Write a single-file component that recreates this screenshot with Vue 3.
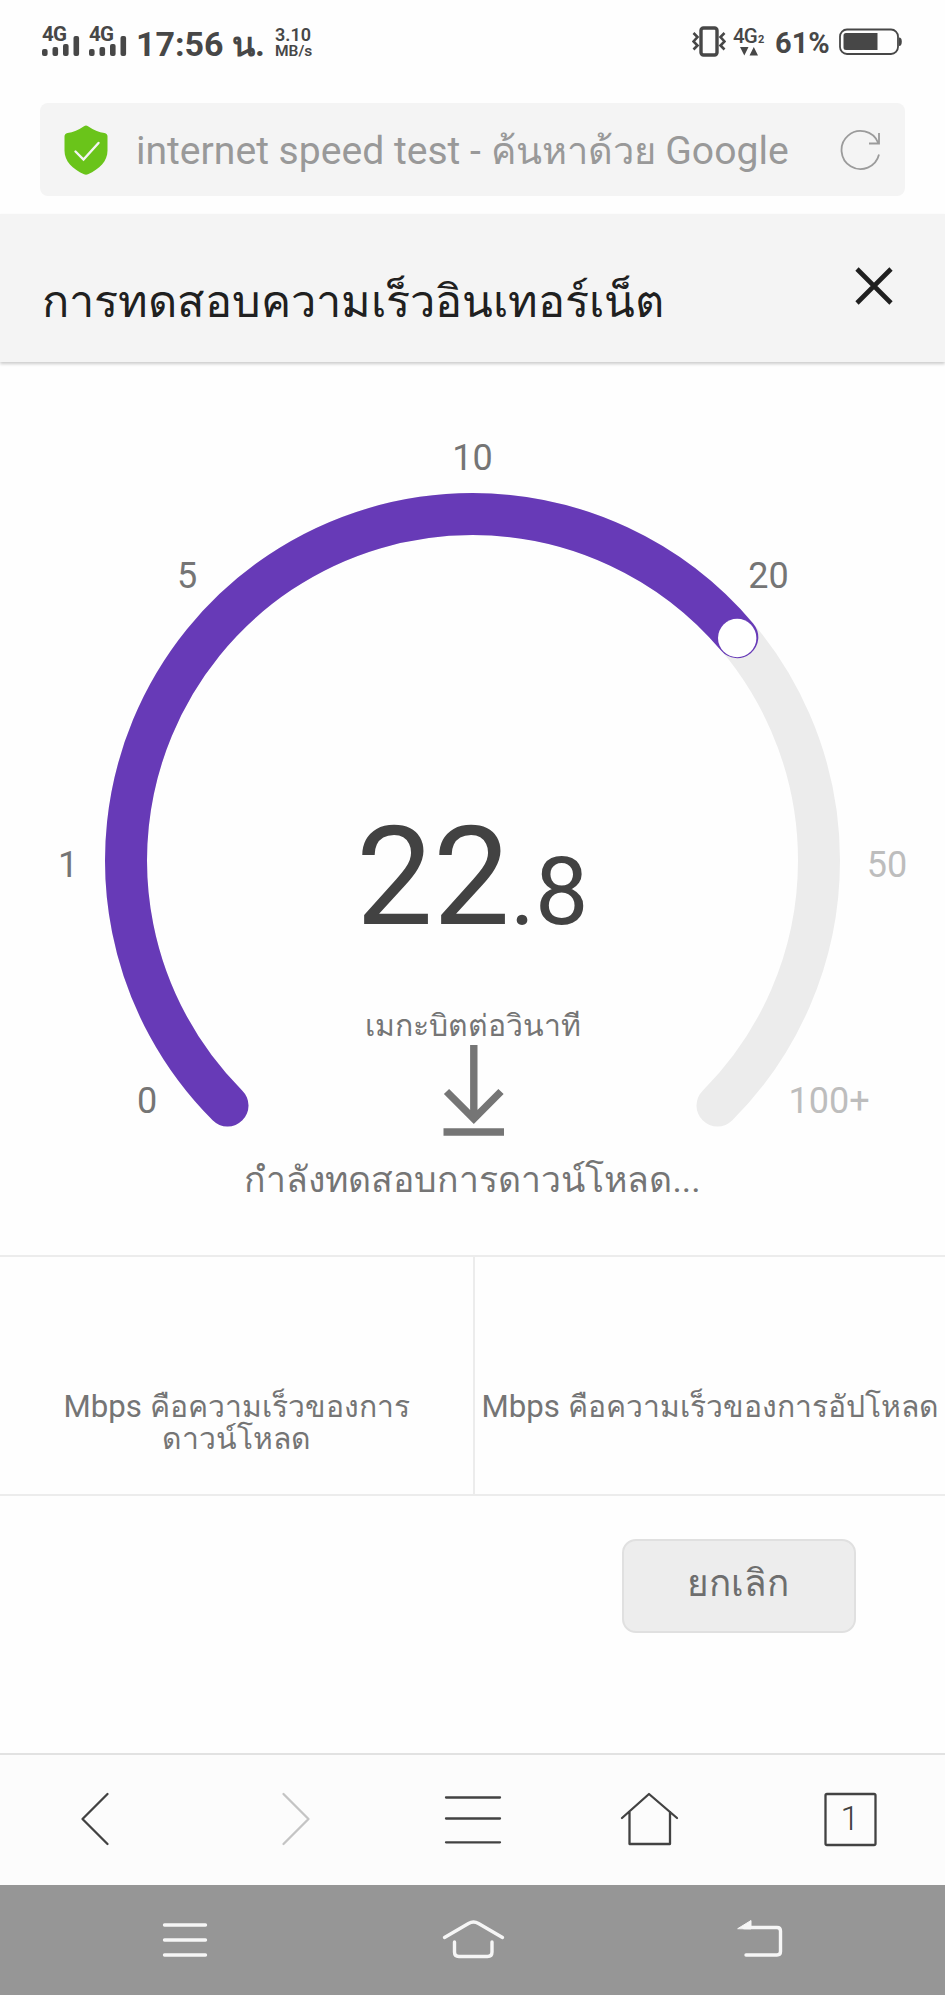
<script setup>
const signals = [0, 1]
const bars = [
  { x: 0, h: 7 },
  { x: 10.5, h: 9 },
  { x: 21, h: 12 },
  { x: 31.5, h: 20 },
]
const ticks = [
  { label: '0', x: 147, y: 1113 },
  { label: '1', x: 68, y: 877 },
  { label: '5', x: 187, y: 588 },
  { label: '10', x: 472.5, y: 470 },
  { label: '20', x: 768.5, y: 588 },
  { label: '50', x: 887, y: 877, dim: true },
  { label: '100+', x: 829, y: 1113, dim: true },
]
</script>

<template>
  <div class="phone">
    <header class="status">
      <svg v-for="s in signals" :key="s" class="signal" width="38" height="42" viewBox="0 -6 38 42">
        <text x="0" y="17" class="net">4G</text>
        <rect v-for="b in bars" :key="b.x" :x="b.x" :y="32 - b.h" width="5.6" :height="b.h" rx="2" />
      </svg>
      <span class="clock">17:56 น.</span>
      <span class="rate"><span class="amount">3.10</span><span>MB/s</span></span>
      <span class="grow"></span>
      <svg class="vibrate" width="34" height="32" viewBox="0 0 34 32">
        <rect x="9" y="2" width="16" height="27" rx="2.5" fill="none" stroke="#474747" stroke-width="3.4" />
        <path d="M1.5 7l4 4-4 4.500 4 4-4 4M32.500 7l-4 4 4 4.500-4 4 4 4" fill="none" stroke="#474747" stroke-width="2.6" />
      </svg>
      <svg class="data" width="34" height="38" viewBox="0 -6 34 38">
        <text x="0" y="16.500" class="data-net">4G</text>
        <text x="25" y="16.500" class="data-sub">2</text>
        <path d="M7 21h8.500l-4.200 8.500zM16.500 29.500H25L20.800 21z" fill="#474747" />
      </svg>
      <span class="percent">61%</span>
      <svg class="battery" width="64" height="28" viewBox="0 0 64 28">
        <rect x="1" y="1.500" width="58" height="24.500" rx="7" fill="none" stroke="#474747" stroke-width="1.800" />
        <path d="M7 5h31.500v17H7a2.500 2.500 0 0 1-2.500-2.500v-12A2.500 2.500 0 0 1 7 5z" fill="#474747" />
        <path d="M60 9.500q2.800 0 2.800 4.200T60 18z" fill="#474747" />
      </svg>
    </header>

    <div class="address">
      <svg class="shield" width="44" height="50" viewBox="0 0 44 50">
        <path d="M20 1.200q2-1.400 4 0 8 5.500 16.500 6.800 3 .5 3 3.500v14c0 11-8 18.500-19.500 23.700q-2 .9-4 0C8.500 44 .5 36.500.5 25.500v-14Q.5 8.500 3.500 8 12 6.700 20 1.200z" fill="#6ac41a" />
        <path d="M11.500 26.500l8 8L34.500 18" fill="none" stroke="#f4f4f4" stroke-width="2.400" stroke-linecap="round" />
      </svg>
      <span class="url">internet speed test - <span class="thai">ค้นหาด้วย</span> Google</span>
      <svg class="reload" width="42" height="42" viewBox="0 0 42 42">
        <path d="M39 25.500A19 19 0 1 1 38 13.500M39 4v10.500H29" fill="none" stroke="#9b9b9b" stroke-width="1.800" />
      </svg>
    </div>

    <div class="title-bar">
      <h1>การทดสอบความเร็วอินเทอร์เน็ต</h1>
      <svg class="close" width="38" height="38" viewBox="0 0 38 38">
        <path d="M2 2l34 34M36 2L2 36" stroke="#1f1f1f" stroke-width="4.600" />
      </svg>
    </div>

    <svg class="gauge" width="945" height="889" viewBox="0 366 945 889">
      <path d="M227.500 1105.500A346.500 346.500 0 1 1 717.500 1105.500" class="track" />
      <path d="M227.500 1105.500A346.500 346.500 0 0 1 472.500 514A346.500 346.500 0 0 1 737.300 637.200" class="progress" />
      <circle cx="737.200" cy="638" r="19.200" fill="#fff" />
      <text v-for="t in ticks" :key="t.label" :x="t.x" :y="t.y" :class="['tick', { dim: t.dim }]">{{ t.label }}</text>
      <text x="356" y="924" class="value">22<tspan class="fraction">.8</tspan></text>
      <text x="472.500" y="1036" class="unit">เมกะบิตต่อวินาที</text>
      <path d="M473.800 1045v74M446.500 1091.500l27.300 27.300L501 1091.500M443.500 1132h60.500" fill="none" stroke="#757575" stroke-width="7.400" />
      <text x="472.500" y="1191.500" class="state">กำลังทดสอบการดาวน์โหลด...</text>
    </svg>

    <section class="results">
      <div class="cell"><p>Mbps <span class="thai">คือความเร็วของการ<br />ดาวน์โหลด</span></p></div>
      <div class="cell"><p>Mbps <span class="thai">คือความเร็วของการอัปโหลด</span></p></div>
    </section>

    <div class="actions"><button class="cancel">ยกเลิก</button></div>

    <nav class="browser-nav">
      <svg width="189" height="129" viewBox="0 1755 189 129"><path d="M107.500 1794L82.500 1819l25 25" /></svg>
      <svg width="189" height="129" viewBox="189 1755 189 129"><path class="off" d="M283.500 1794l25 25-25 25" /></svg>
      <svg width="189" height="129" viewBox="378 1755 189 129"><path d="M446 1797.500h54M446 1818.500h54M446 1842.300h54" /></svg>
      <svg width="189" height="129" viewBox="567 1755 189 129"><path d="M622 1818l27-24 28 24M629.500 1812v32h40.500v-32" /></svg>
      <svg width="189" height="129" viewBox="756 1755 189 129">
        <rect x="825.500" y="1794" width="50" height="51" rx="1.500" />
        <text x="850" y="1830">1</text>
      </svg>
    </nav>

    <nav class="system-nav">
      <svg width="315" height="110" viewBox="0 1885 315 110"><path d="M164.500 1925h41M164.500 1940h41M164.500 1955h41" /></svg>
      <svg width="315" height="110" viewBox="315 1885 315 110"><path d="M444.500 1937.500l24-14q5-3 10 0l24 14M454.500 1942v10q0 4.500 4.500 4.500h28.500q4.500 0 4.500-4.500v-10" /></svg>
      <svg width="315" height="110" viewBox="630 1885 315 110">
        <path d="M744 1927.500h33q3.500 0 3.500 3.500v20.500q0 3.500-3.500 3.500h-31" />
        <path class="tip" d="M738 1928.500l13-8v8z" />
      </svg>
    </nav>
  </div>
</template>

<style>
body { margin: 0; background: #fefefe; }
</style>

<style scoped>
.phone {
  width: 945px;
  height: 1995px;
  display: flex;
  flex-direction: column;
  background: #fefefe;
  font-family: Roboto, "Noto Sans", sans-serif;
  overflow: hidden;
}
.phone svg { display: block; flex: none; }
.status { height: 103px; box-sizing: border-box; padding: 24px 42px 0; display: flex; align-items: flex-start; color: #474747; fill: #474747; }
.signal { margin: -6px 9px 0 0; }
.net { font-size: 20.5px; font-weight: 700; letter-spacing: -0.8px; }
.clock { font-size: 34px; line-height: 40px; font-weight: 700; white-space: nowrap; width: 128px; }
.rate { display: flex; flex-direction: column; font-size: 15.5px; line-height: 16px; font-weight: 600; margin: 3px 0 0 11px; }
.rate .amount { font-size: 18px; }
.grow { flex: 1; }
.vibrate { margin: 2px 7px 0 0; }
.data { margin: -4px 8px 0 0; }
.data-net { font-size: 20.5px; font-weight: 500; letter-spacing: -0.8px; }
.data-sub { font-size: 11px; font-weight: 700; }
.percent { font-size: 29px; line-height: 38px; font-weight: 700; width: 56px; white-space: nowrap; }
.battery { margin: 4px 0 0 8px; }
.address { height: 93px; margin: 0 40px; padding: 0 23px 0 24px; display: flex; align-items: center; background: #f4f4f4; border-radius: 8px; flex: none; }
.url { flex: 1; padding: 3px 0 0 28px; font-size: 39.1px; line-height: 50px; color: #999; white-space: nowrap; }
.url .thai { font-size: 38px; }
.title-bar { height: 148px; margin-top: 18px; display: flex; justify-content: space-between; background: #f4f4f4; box-shadow: 0 2px 3px rgba(0, 0, 0, 0.2); flex: none; padding: 0 52px 0 42px; }
.title-bar h1 { margin: 58px 0 0; font-size: 45.1px; line-height: 60px; font-weight: 400; color: #202020; white-space: nowrap; }
.close { margin-top: 53px; }
.gauge { margin-top: 4px; height: 889px; }
.track, .progress { fill: none; stroke-width: 42; stroke-linecap: round; }
.track { stroke: #ececec; }
.progress { stroke: #673ab7; }
.tick { font-size: 36px; fill: #757575; text-anchor: middle; }
.dim { fill: #bdbdbd; }
.value { font-size: 137px; fill: #424242; }
.fraction { font-size: 95px; }
.unit { font-size: 30.2px; fill: #757575; text-anchor: middle; }
.state { font-size: 35.6px; fill: #757575; text-anchor: middle; }
.results { height: 241px; box-sizing: border-box; display: grid; grid-template-columns: 475px 470px; border-top: 2px solid #ececec; border-bottom: 2px solid #ececec; flex: none; }
.cell { text-align: center; padding-top: 134px; }
.cell:first-child { border-right: 2px solid #ececec; }
.cell p { margin: 0; font-size: 31.2px; line-height: 32px; color: #757575; white-space: nowrap; }
.cell .thai { font-size: 30.1px; }
.actions { flex: 1; padding: 43px 89px 0 0; display: flex; justify-content: flex-end; align-items: flex-start; }
.cancel { width: 234px; height: 94px; border: 2px solid #e0e0e0; border-radius: 14px; background: #ededed; color: #6e6e6e; font-family: inherit; font-size: 36.8px; padding: 0 2px 7px 0; }
.browser-nav { height: 132px; box-sizing: border-box; flex: none; display: flex; border-top: 2px solid #e2e2e2; background: #fcfcfc; }
.browser-nav path, .browser-nav rect { fill: none; stroke: #424242; stroke-width: 2.3; stroke-linecap: round; stroke-linejoin: round; }
.browser-nav .off { stroke: #c4c4c4; }
.browser-nav text { font-size: 34px; font-weight: 300; fill: #424242; text-anchor: middle; }
.system-nav { height: 110px; flex: none; display: flex; background: #969696; }
.system-nav path { fill: none; stroke: #f6f6f6; stroke-width: 3.4; stroke-linecap: round; stroke-linejoin: round; }
.system-nav .tip { fill: #f6f6f6; stroke-width: 1; }
</style>
